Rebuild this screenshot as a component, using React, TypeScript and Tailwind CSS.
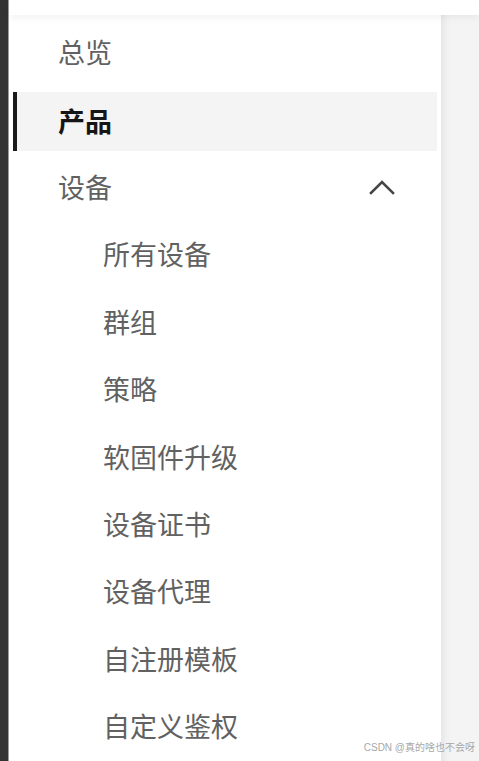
import React from "react";

type Item = { label: string; level: 1 | 2; active?: boolean; open?: boolean };

const items: Item[] = [
  { label: "总览", level: 1 },
  { label: "产品", level: 1, active: true },
  { label: "设备", level: 1, open: true },
  { label: "所有设备", level: 2 },
  { label: "群组", level: 2 },
  { label: "策略", level: 2 },
  { label: "软固件升级", level: 2 },
  { label: "设备证书", level: 2 },
  { label: "设备代理", level: 2 },
  { label: "自注册模板", level: 2 },
  { label: "自定义鉴权", level: 2 },
];

const ChevronUp = () => (
  <svg width="26" height="16" viewBox="0 0 26 16" fill="none">
    <path d="M2 14 L13 3 L24 14" stroke="#454545" strokeWidth="2.6" strokeLinecap="square" />
  </svg>
);

const NavRow: React.FC<{ item: Item }> = ({ item }) => {
  const pad = item.level === 1 ? "pl-[41px]" : "pl-[86px]";
  if (item.active) {
    return (
      <div className="mx-[4px] h-[59px] mt-[2px] -mb-[2px] flex items-center border-l-[4px] border-[#1a1a1a] bg-[#f4f4f4] pl-[41px] text-[27px] font-bold text-[#161616]">
        <span className="-mt-[2px]">{item.label}</span>
      </div>
    );
  }
  return (
    <div className={`mx-[4px] h-[59px] flex items-center justify-between border-l-[4px] border-transparent ${pad} pr-[42px] text-[27px] text-[#616161]`}>
      <span>{item.label}</span>
      {item.open && <ChevronUp />}
    </div>
  );
};

export default function App() {
  return (
    <div
      className="w-[479px] h-[761px] flex bg-white overflow-hidden relative"
      style={{ fontFamily: '"Noto Sans CJK SC", "Noto Sans", sans-serif' }}
    >
      <div className="w-[8px] bg-[#333333]" />
      <div className="w-px bg-[#9a9a9a]" />
      <div className="flex-1 flex flex-col">
        <div className="h-[15px] bg-white relative z-10 shadow-[0_3px_8px_rgba(0,0,0,0.05)]" />
        <div className="flex-1 flex">
          <nav className="w-[432px] bg-white pt-[8px] flex flex-col gap-[8.4px]">
            {items.map((it) => (
              <NavRow key={it.label} item={it} />
            ))}
          </nav>
          <div className="flex-1 bg-[#f4f4f4] shadow-[inset_8px_0_8px_-6px_rgba(0,0,0,0.08)]" />
        </div>
      </div>
      <div
        className="absolute right-[4px] bottom-[6px] text-[10px] text-[#a8a8a8]"
        style={{ fontFamily: '"Liberation Sans", "Noto Sans CJK SC", sans-serif' }}
      >
        CSDN @真的啥也不会呀
      </div>
    </div>
  );
}
